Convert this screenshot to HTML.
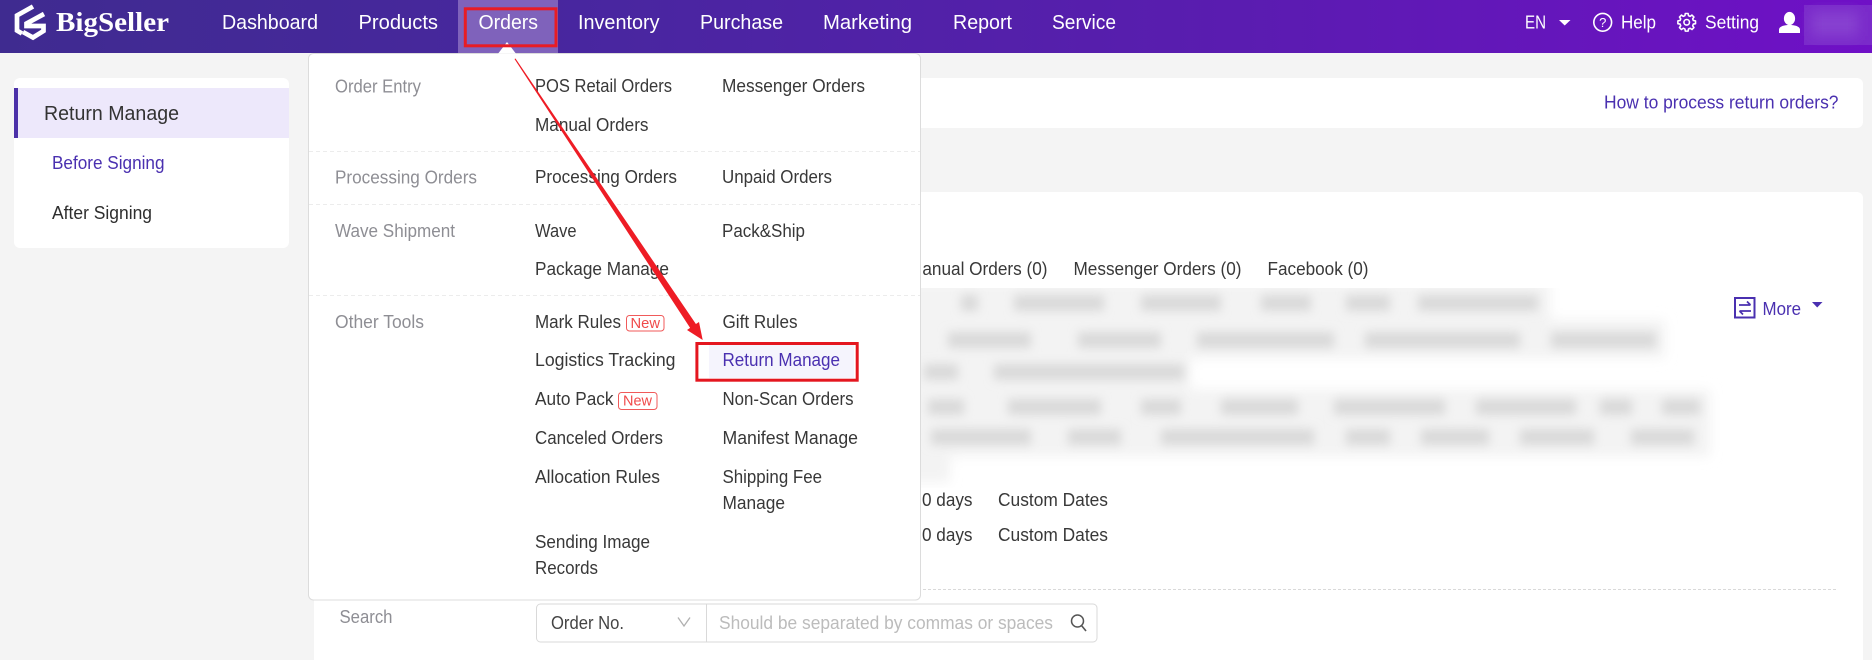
<!DOCTYPE html>
<html lang="en">
<head>
<meta charset="utf-8">
<title>BigSeller - Return Manage</title>
<style>
html,body{margin:0;padding:0;width:1872px;height:660px;overflow:hidden;background:#f4f4f4}
svg{display:block}
text{font-family:"Liberation Sans",Arial,sans-serif;font-size:18px;fill:#383838}
.nav{font-size:20px;fill:#fff}
.top{font-size:18.5px;fill:#fff}
.lab{fill:#8e8e94}
.pur{fill:#4a30b0}
.new{font-size:14.5px;fill:#f04a4a}
</style>
</head>
<body>
<svg width="1872" height="660" viewBox="0 0 1872 660" xmlns="http://www.w3.org/2000/svg">
<defs>
<linearGradient id="hd" x1="0" y1="0" x2="1" y2="0">
<stop offset="0" stop-color="#3f2b90"/>
<stop offset=".33" stop-color="#4926a0"/>
<stop offset=".66" stop-color="#5a1cb0"/>
<stop offset="1" stop-color="#6f10c6"/>
</linearGradient>
<filter id="b5" x="-10%" y="-30%" width="120%" height="160%"><feGaussianBlur stdDeviation="6"/></filter>
<filter id="b3" x="-10%" y="-30%" width="120%" height="160%"><feGaussianBlur stdDeviation="5"/></filter>
<filter id="b6" x="-40%" y="-60%" width="180%" height="220%"><feGaussianBlur stdDeviation="6"/></filter>
<clipPath id="blurclip"><rect x="900" y="288" width="900" height="200"/></clipPath>
</defs>

<!-- page -->
<rect width="1872" height="660" fill="#f4f4f4"/>

<!-- header -->
<rect width="1872" height="53" fill="url(#hd)"/>
<rect x="458" y="0" width="100" height="53" fill="#7f62bb"/>

<!-- logo -->
<g fill="none" stroke="#fff" stroke-width="4.7" stroke-linejoin="miter">
<polyline points="33,6.5 17,15.5 17,30.5 22,33.5"/>
<polyline points="44,14 26.5,23.5 26.5,26 43.5,26 43.5,31 33,37.5 23,32"/>
</g>
<text x="56" y="31" textLength="113" lengthAdjust="spacingAndGlyphs" style="font-family:'Liberation Serif',serif;font-size:27px;font-weight:bold;fill:#fff">BigSeller</text>

<!-- nav -->
<text class="nav" x="222" y="29" textLength="96" lengthAdjust="spacingAndGlyphs">Dashboard</text>
<text class="nav" x="358.5" y="29" textLength="79.5" lengthAdjust="spacingAndGlyphs">Products</text>
<text class="nav" x="478.5" y="29" textLength="59.5" lengthAdjust="spacingAndGlyphs">Orders</text>
<text class="nav" x="578" y="29" textLength="81.5" lengthAdjust="spacingAndGlyphs">Inventory</text>
<text class="nav" x="700" y="29" textLength="83" lengthAdjust="spacingAndGlyphs">Purchase</text>
<text class="nav" x="823" y="29" textLength="89" lengthAdjust="spacingAndGlyphs">Marketing</text>
<text class="nav" x="953" y="29" textLength="59" lengthAdjust="spacingAndGlyphs">Report</text>
<text class="nav" x="1052" y="29" textLength="64" lengthAdjust="spacingAndGlyphs">Service</text>

<!-- header right -->
<text class="top" x="1525" y="28.5" textLength="21" lengthAdjust="spacingAndGlyphs">EN</text>
<polygon points="1559,20 1570.5,20 1564.7,25.5" fill="#fff"/>
<circle cx="1602.7" cy="22.3" r="8.9" fill="none" stroke="#fff" stroke-width="1.6"/>
<text x="1602.7" y="27" text-anchor="middle" style="font-size:13px;fill:#fff">?</text>
<text class="top" x="1621" y="28.5" textLength="35" lengthAdjust="spacingAndGlyphs">Help</text>
<g transform="translate(1686.7 22.3) scale(.93)" fill="none" stroke="#fff" stroke-width="1.7" stroke-linejoin="round">
<path d="M7.15-1.92 9.48-1.5V1.5L7.15 1.92 6.41 3.7 7.77 5.64 5.64 7.77 3.7 6.41 1.92 7.15 1.5 9.48H-1.5L-1.92 7.15-3.7 6.41-5.64 7.77-7.77 5.64-6.41 3.7-7.15 1.92-9.48 1.5V-1.5L-7.15-1.92-6.41-3.7-7.77-5.64-5.64-7.77-3.7-6.41-1.92-7.15-1.5-9.48H1.5L1.92-7.15 3.7-6.41 5.64-7.77 7.77-5.64 6.41-3.7Z"/>
<circle r="3"/>
</g>
<text class="top" x="1705" y="28.5" textLength="54" lengthAdjust="spacingAndGlyphs">Setting</text>
<ellipse cx="1789.5" cy="18.5" rx="5.6" ry="6.6" fill="#fff"/>
<path d="M1779 33v-3.2c0-3.6 5.6-4.8 10.5-4.8s10.5 1.2 10.5 4.8V33z" fill="#fff"/>
<rect x="1804" y="5" width="68" height="40" fill="#7a2bca"/>
<rect x="1812" y="12" width="46" height="24" fill="#8741d0" filter="url(#b6)"/>

<!-- sidebar -->
<rect x="14" y="78" width="275" height="170" rx="6" fill="#fff"/>
<rect x="14" y="88" width="275" height="50" fill="#ede8fb"/>
<rect x="14" y="88" width="4" height="50" fill="#4b30a8"/>
<text x="44" y="120" textLength="135" lengthAdjust="spacingAndGlyphs" style="font-size:20px;fill:#333">Return Manage</text>
<text class="pur" x="52" y="169" textLength="112.5" lengthAdjust="spacingAndGlyphs">Before Signing</text>
<text x="52" y="219" textLength="100" lengthAdjust="spacingAndGlyphs" style="fill:#2e2e2e">After Signing</text>

<!-- top card -->
<rect x="314" y="78" width="1549" height="50" rx="6" fill="#fff"/>
<text class="pur" x="1604" y="108.5" textLength="234.5" lengthAdjust="spacingAndGlyphs">How to process return orders?</text>

<!-- main card -->
<path d="M314 660V198a6 6 0 0 1 6-6H1857a6 6 0 0 1 6 6V660z" fill="#fff"/>

<!-- tabs -->
<text x="908" y="275" textLength="139.5" lengthAdjust="spacingAndGlyphs">Manual Orders (0)</text>
<text x="1073.5" y="275" textLength="168" lengthAdjust="spacingAndGlyphs">Messenger Orders (0)</text>
<text x="1267.5" y="275" textLength="101" lengthAdjust="spacingAndGlyphs">Facebook (0)</text>

<!-- blurred filter area -->
<g clip-path="url(#blurclip)">
<g fill="#f3f3f3" filter="url(#b5)">
<rect x="900" y="282" width="650" height="38"/>
<rect x="900" y="320" width="765" height="38"/>
<rect x="900" y="358" width="290" height="32"/>
<rect x="900" y="390" width="810" height="66"/>
<rect x="900" y="456" width="50" height="26"/>
</g>
<g fill="#d9d9d9" filter="url(#b3)">
<rect x="961" y="295" width="17" height="16"/><rect x="1014" y="295" width="90" height="16"/><rect x="1141" y="295" width="80" height="16"/><rect x="1261" y="295" width="50" height="16"/><rect x="1346" y="295" width="44" height="16"/><rect x="1418" y="295" width="120" height="16"/>
<rect x="948" y="332" width="83" height="16"/><rect x="1078" y="332" width="83" height="16"/><rect x="1197" y="332" width="137" height="16"/><rect x="1365" y="332" width="155" height="16"/><rect x="1551" y="332" width="105" height="16"/>
<rect x="924" y="364" width="34" height="16"/><rect x="994" y="364" width="190" height="16"/>
<rect x="928" y="399" width="36" height="16"/><rect x="1008" y="399" width="93" height="16"/><rect x="1141" y="399" width="40" height="16"/><rect x="1221" y="399" width="77" height="16"/><rect x="1334" y="399" width="111" height="16"/><rect x="1476" y="399" width="100" height="16"/><rect x="1600" y="399" width="32" height="16"/><rect x="1662" y="399" width="38" height="16"/>
<rect x="931" y="429" width="100" height="16"/><rect x="1068" y="429" width="53" height="16"/><rect x="1161" y="429" width="153" height="16"/><rect x="1346" y="429" width="44" height="16"/><rect x="1421" y="429" width="68" height="16"/><rect x="1520" y="429" width="74" height="16"/><rect x="1631" y="429" width="63" height="16"/>
</g>
</g>

<!-- More -->
<rect x="1735" y="298" width="19.5" height="19.5" fill="none" stroke="#4a30b0" stroke-width="2"/>
<path d="M1739 305h11.5M1747 301.5l3.5 3.5M1751 311H1739.5M1743 314.5l-3.5-3.5" fill="none" stroke="#4a30b0" stroke-width="1.7"/>
<text class="pur" x="1762.5" y="315" textLength="38.5" lengthAdjust="spacingAndGlyphs">More</text>
<polygon points="1812,302 1822.5,302 1817.2,307.5" fill="#4a30b0"/>

<!-- date rows -->
<text x="922" y="506" textLength="50.5" lengthAdjust="spacingAndGlyphs">0 days</text>
<text x="998" y="506" textLength="110" lengthAdjust="spacingAndGlyphs">Custom Dates</text>
<text x="922" y="541" textLength="50.5" lengthAdjust="spacingAndGlyphs">0 days</text>
<text x="998" y="541" textLength="110" lengthAdjust="spacingAndGlyphs">Custom Dates</text>

<!-- dashed line -->
<line x1="338" y1="589.5" x2="1838" y2="589.5" stroke="#d9d9d9" stroke-width="1" stroke-dasharray="3 2"/>

<!-- search -->
<text class="lab" x="339.5" y="623" textLength="53" lengthAdjust="spacingAndGlyphs">Search</text>
<rect x="536.5" y="604" width="560.5" height="38" rx="4" fill="#fff" stroke="#d9d9d9"/>
<line x1="706.5" y1="604" x2="706.5" y2="642" stroke="#d9d9d9"/>
<text x="551" y="629" textLength="73" lengthAdjust="spacingAndGlyphs" style="fill:#444">Order No.</text>
<polyline points="678,617.5 684,626 690,617.5" fill="none" stroke="#b0b0b0" stroke-width="1.3"/>
<text x="719" y="629" textLength="334" lengthAdjust="spacingAndGlyphs" style="fill:#bcbcbc">Should be separated by commas or spaces</text>
<circle cx="1077.5" cy="621" r="6" fill="none" stroke="#555" stroke-width="1.5"/>
<line x1="1081.5" y1="625.5" x2="1086" y2="631" stroke="#555" stroke-width="1.6"/>

<!-- dropdown -->
<rect x="308.5" y="53.5" width="612" height="546.5" rx="5" fill="#fff" stroke="#dcdcdc"/>
<polygon points="507,42 498,53.8 516,53.8" fill="#fff"/>
<g stroke="#ececec" stroke-width="1" stroke-dasharray="4 3">
<line x1="309" y1="151.5" x2="920" y2="151.5"/>
<line x1="309" y1="204.5" x2="920" y2="204.5"/>
<line x1="309" y1="295.5" x2="920" y2="295.5"/>
</g>

<text class="lab" x="335" y="92.5" textLength="86" lengthAdjust="spacingAndGlyphs">Order Entry</text>
<text class="lab" x="335" y="183.5" textLength="142" lengthAdjust="spacingAndGlyphs">Processing Orders</text>
<text class="lab" x="335" y="237" textLength="120" lengthAdjust="spacingAndGlyphs">Wave Shipment</text>
<text class="lab" x="335" y="328" textLength="89" lengthAdjust="spacingAndGlyphs">Other Tools</text>

<text x="535" y="92" textLength="137" lengthAdjust="spacingAndGlyphs">POS Retail Orders</text>
<text x="535" y="131" textLength="113.5" lengthAdjust="spacingAndGlyphs">Manual Orders</text>
<text x="535" y="183" textLength="142" lengthAdjust="spacingAndGlyphs">Processing Orders</text>
<text x="535" y="237" textLength="41.5" lengthAdjust="spacingAndGlyphs">Wave</text>
<text x="535" y="275" textLength="134" lengthAdjust="spacingAndGlyphs">Package Manage</text>
<text x="535" y="328" textLength="86" lengthAdjust="spacingAndGlyphs">Mark Rules</text>
<rect x="626.5" y="315.5" width="37.5" height="15.5" rx="3" fill="#fff" stroke="#f05a5a"/>
<text class="new" x="630.5" y="328" textLength="29.5" lengthAdjust="spacingAndGlyphs">New</text>
<text x="535" y="366" textLength="140.5" lengthAdjust="spacingAndGlyphs">Logistics Tracking</text>
<text x="535" y="405" textLength="78.5" lengthAdjust="spacingAndGlyphs">Auto Pack</text>
<rect x="618.5" y="392.5" width="38.5" height="17" rx="3" fill="#fff" stroke="#f05a5a"/>
<text class="new" x="623" y="405.5" textLength="29" lengthAdjust="spacingAndGlyphs">New</text>
<text x="535" y="444" textLength="128" lengthAdjust="spacingAndGlyphs">Canceled Orders</text>
<text x="535" y="483" textLength="125" lengthAdjust="spacingAndGlyphs">Allocation Rules</text>
<text x="535" y="548" textLength="115" lengthAdjust="spacingAndGlyphs">Sending Image</text>
<text x="535" y="574" textLength="63" lengthAdjust="spacingAndGlyphs">Records</text>

<text x="722" y="92" textLength="143" lengthAdjust="spacingAndGlyphs">Messenger Orders</text>
<text x="722" y="183" textLength="110" lengthAdjust="spacingAndGlyphs">Unpaid Orders</text>
<text x="722" y="237" textLength="83" lengthAdjust="spacingAndGlyphs">Pack&amp;Ship</text>
<text x="722.5" y="328" textLength="75" lengthAdjust="spacingAndGlyphs">Gift Rules</text>
<rect x="709" y="345" width="145" height="33" fill="#f5f4fd"/>
<text class="pur" x="722.5" y="366" textLength="117.5" lengthAdjust="spacingAndGlyphs">Return Manage</text>
<text x="722.5" y="405" textLength="131" lengthAdjust="spacingAndGlyphs">Non-Scan Orders</text>
<text x="722.5" y="444" textLength="135.5" lengthAdjust="spacingAndGlyphs">Manifest Manage</text>
<text x="722.5" y="483" textLength="99.5" lengthAdjust="spacingAndGlyphs">Shipping Fee</text>
<text x="722.5" y="509" textLength="62.5" lengthAdjust="spacingAndGlyphs">Manage</text>

<!-- annotations -->
<rect x="465.3" y="8.8" width="90.7" height="37" fill="none" stroke="#e81c24" stroke-width="3"/>
<rect x="696.9" y="343.5" width="160.3" height="36.7" fill="none" stroke="#e4161f" stroke-width="3"/>
<polygon points="514.5,59 515.5,58.5 695.9,324 699,322 702.7,340 687,330 690.1,327.9" fill="#ee1c25"/>
</svg>
</body>
</html>
